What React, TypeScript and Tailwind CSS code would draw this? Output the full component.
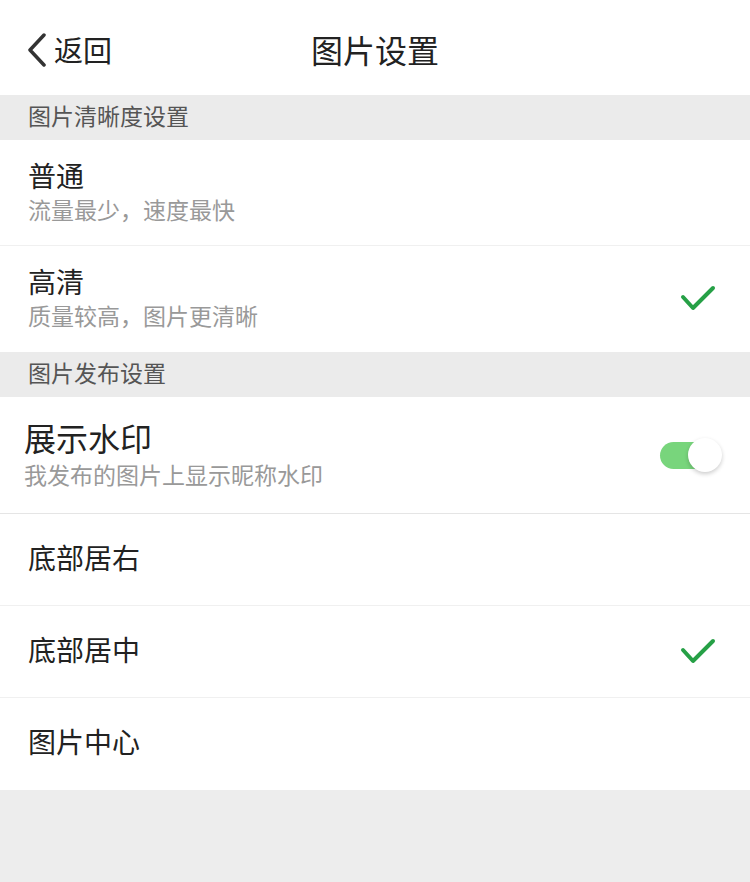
import React from 'react'

const font = { fontFamily: '"Noto Sans CJK SC", "Noto Sans", sans-serif' }

function Check() {
  return (
    <svg width="36" height="28" viewBox="0 0 36 28" fill="none">
      <path d="M3 12 L13 23 L33 3" stroke="#26a046" strokeWidth="4" strokeLinecap="round" strokeLinejoin="round" />
    </svg>
  )
}

function SectionHeader({ text }: { text: string }) {
  return (
    <div className="h-[45px] bg-[#ebebeb] flex items-center px-[28px] pb-[5px]">
      <span className="text-[23px] text-[#555555] leading-none">{text}</span>
    </div>
  )
}

function QualityRow({ title, desc, checked, border }: { title: string; desc: string; checked?: boolean; border?: boolean }) {
  return (
    <div className={`h-[106px] bg-white flex items-center justify-between pl-[28px] pr-[34px] ${border ? 'border-b border-[#f0f0f0]' : ''}`}>
      <div className="flex flex-col pb-[5px]">
        <span className="text-[28px] text-[#222222] leading-[36px]">{title}</span>
        <span className="text-[23px] text-[#999999] leading-[30px] mt-[1px]">{desc}</span>
      </div>
      {checked && <Check />}
    </div>
  )
}

function PositionRow({ title, checked, border }: { title: string; checked?: boolean; border?: boolean }) {
  return (
    <div className={`h-[92px] bg-white flex items-center justify-between pl-[28px] pr-[34px] ${border ? 'border-b border-[#f0f0f0]' : ''}`}>
      <span className="text-[28px] text-[#222222] leading-none pb-[6px]">{title}</span>
      {checked && <Check />}
    </div>
  )
}

export default function App() {
  const positions = [
    { title: '底部居右', checked: false },
    { title: '底部居中', checked: true },
    { title: '图片中心', checked: false },
  ]

  return (
    <div className="w-[750px] h-[882px] bg-[#ededed] flex flex-col" style={font}>
      {/* Nav bar */}
      <div className="h-[95px] bg-white relative flex items-center justify-center">
        <div className="absolute left-[26px] top-0 h-full flex items-center">
          <svg width="22" height="34" viewBox="0 0 22 34" fill="none" className="mt-[4px]">
            <path d="M18 2 L4 17 L18 32" stroke="#333333" strokeWidth="3.5" strokeLinecap="round" strokeLinejoin="round" />
          </svg>
          <span className="text-[29px] text-[#222222] ml-[6px] leading-none mt-[3px]">返回</span>
        </div>
        <span className="text-[32px] text-[#222222] leading-none mt-[2px]">图片设置</span>
      </div>

      <SectionHeader text="图片清晰度设置" />
      <QualityRow title="普通" desc="流量最少，速度最快" border />
      <QualityRow title="高清" desc="质量较高，图片更清晰" checked />

      <SectionHeader text="图片发布设置" />
      <div className="h-[117px] bg-white flex items-center justify-between pl-[24px] pr-[28px] border-b border-[#e5e5e5]">
        <div className="flex flex-col pb-[4px]">
          <span className="text-[32px] text-[#222222] leading-[40px]">展示水印</span>
          <span className="text-[23px] text-[#999999] leading-[30px] mt-[2px]">我发布的图片上显示昵称水印</span>
        </div>
        <div className="relative w-[62px] h-[34px]">
          <div className="absolute left-0 top-[4px] w-[56px] h-[27px] rounded-full bg-[#78d57c]" />
          <div className="absolute right-0 top-0 w-[34px] h-[34px] rounded-full bg-white shadow-[0_2px_4px_rgba(0,0,0,0.2)]" />
        </div>
      </div>

      {positions.map((p, idx) => (
        <PositionRow key={idx} title={p.title} checked={p.checked} border={idx < positions.length - 1} />
      ))}
    </div>
  )
}
